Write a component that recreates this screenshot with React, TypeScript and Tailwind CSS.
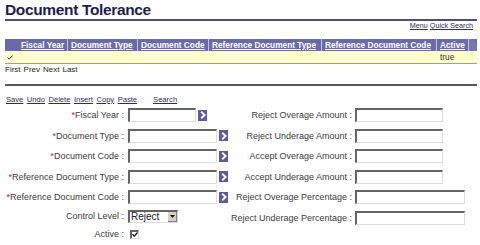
import React from 'react';

const headerCols = [
  { label: 'Fiscal Year', w: 'w-[50px]' },
  { label: 'Document Type', w: 'w-[70px]' },
  { label: 'Document Code', w: 'w-[71px]' },
  { label: 'Reference Document Type', w: 'w-[113px]' },
  { label: 'Reference Document Code', w: 'w-[115px]' },
  { label: 'Active', w: 'w-[32px]' },
];

type LeftRow = { label: string; req?: boolean; kind: 'lookup' | 'select' | 'check'; w?: string };

const leftRows: LeftRow[] = [
  { label: 'Fiscal Year', req: true, kind: 'lookup', w: 'w-[68px]' },
  { label: 'Document Type', req: true, kind: 'lookup', w: 'w-[89px]' },
  { label: 'Document Code', req: true, kind: 'lookup', w: 'w-[89px]' },
  { label: 'Reference Document Type', req: true, kind: 'lookup', w: 'w-[89px]' },
  { label: 'Reference Document Code', req: true, kind: 'lookup', w: 'w-[89px]' },
  { label: 'Control Level', kind: 'select' },
  { label: 'Active', kind: 'check' },
];

const rightRows = [
  { label: 'Reject Overage Amount', w: 'w-[88px]' },
  { label: 'Reject Underage Amount', w: 'w-[88px]' },
  { label: 'Accept Overage Amount', w: 'w-[88px]' },
  { label: 'Accept Underage Amount', w: 'w-[88px]' },
  { label: 'Reject Overage Percentage', w: 'w-[110px]' },
  { label: 'Reject Underage Percentage', w: 'w-[110px]' },
];

const inset =
  'border-t-2 border-l-2 border-r border-b border-t-[#646464] border-l-[#646464] border-r-[#dcdcdc] border-b-[#dcdcdc] bg-white';

const TextBox = ({ w }: { w: string }) => <div className={`${w} h-[14px] ${inset}`} />;

const LookupBtn = () => (
  <span className="ml-[2px] flex h-[11px] w-[9px] items-center justify-center bg-[#5a5aa2]">
    <svg width="6" height="8" viewBox="0 0 6 8">
      <path d="M1.2 0.8 L4.6 4 L1.2 7.2" stroke="white" strokeWidth="1.9" fill="none" />
    </svg>
  </span>
);

const Label = ({ text, req }: { text: string; req?: boolean }) => (
  <span className="whitespace-nowrap text-right text-[9px] leading-[12px] text-[#3c3c3c]">
    {req && <span className="text-[#d01010]">*</span>}
    {text} :
  </span>
);

export default function App() {
  return (
    <div className="h-[245px] w-[480px] overflow-hidden bg-white font-['Liberation_Sans',Arial,sans-serif]">
      <div className="ml-[5px] w-[472px]">
        <div className="h-[19px] pt-[1px] text-[15.5px] font-bold leading-[18px] tracking-[-0.35px] text-[#1e1e4a]">
          Document Tolerance
        </div>
        <div className="h-[2px] bg-[#4e4e6e]" />
        <div className="flex h-[11px] items-center justify-end gap-[2px] pr-[4px] text-[7.2px] text-[#2c2c66] underline">
          <span>Menu</span>
          <span>Quick Search</span>
        </div>

        {/* grid header */}
        <div className="mt-[7px] flex h-[12px] bg-[#6a6aa6]">
          <div className="w-[13px] rounded-tl-[10px] bg-[#6a6aa6]" />
          {headerCols.map((c) => (
            <div
              key={c.label}
              className={`${c.w} shrink-0 whitespace-nowrap border-r border-[#c4c4dc] pl-[3px] text-[8.3px] font-bold leading-[12px] text-white underline`}
            >
              {c.label}
            </div>
          ))}
          <div className="w-[8px] rounded-tr-[9px] bg-[#7676b0]" />
        </div>
        <div className="flex h-[13px] border-b border-[#9c9cb4] bg-[#ffffcc]">
          <div className="flex w-[13px] items-center pl-[2px]">
            <svg width="6" height="5" viewBox="0 0 6 5">
              <path d="M0.5 2.5 L2.2 4.2 L5.5 0.6" stroke="#333" strokeWidth="1" fill="none" />
            </svg>
          </div>
          <div className="w-[419px]" />
          <div className="pl-[3px] text-[8.3px] leading-[12px] text-[#333]">true</div>
        </div>
        <div className="flex h-[12px] items-center gap-[3px] text-[8px] text-[#222]">
          <span>First</span>
          <span>Prev</span>
          <span>Next</span>
          <span>Last</span>
        </div>
        <div className="mt-[8px] h-[2px] bg-[#55556a]" />
        <div className="mt-[8px] flex h-[11px] items-center pl-[1px] text-[7.6px] text-[#2c2c66] underline">
          <div className="flex gap-[3.5px]">
            <span>Save</span>
            <span>Undo</span>
            <span>Delete</span>
            <span>Insert</span>
            <span>Copy</span>
            <span>Paste</span>
          </div>
          <span className="ml-[16px]">Search</span>
        </div>
      </div>

      {/* form */}
      <div className="flex flex-col">
        {leftRows.map((r, i) => {
          const right = rightRows[i];
          return (
            <div
              key={r.label}
              className={`grid grid-cols-[127px_106px_121px_1fr] items-center ${
                r.kind === 'check' ? 'h-[12px]' : 'h-[20.5px]'
              }`}
            >
              <div className={`flex justify-end pr-[3px] ${r.kind === 'select' ? '-mt-[3px]' : ''}`}>
                <Label text={r.label} req={r.req} />
              </div>
              <div className="flex items-center pl-[1px]">
                {r.kind === 'lookup' && (
                  <>
                    <TextBox w={r.w!} />
                    <LookupBtn />
                  </>
                )}
                {r.kind === 'select' && (
                  <div className={`-mt-[3px] flex h-[13px] w-[50px] items-center justify-between ${inset}`}>
                    <span className="pl-[1px] text-[10px] leading-[11px] text-[#222]">Reject</span>
                    <span className="flex h-[10px] w-[9px] items-center justify-center border-r border-b border-[#808080] bg-[#d4d0c8]">
                      <svg width="5" height="3" viewBox="0 0 5 3">
                        <path d="M0 0 H5 L2.5 3 Z" fill="#111" />
                      </svg>
                    </span>
                  </div>
                )}
                {r.kind === 'check' && (
                  <div className={`ml-[2px] flex h-[9px] w-[9px] items-center justify-center ${inset}`}>
                    <svg width="6" height="5" viewBox="0 0 6 5">
                      <path d="M0.5 2.2 L2.2 4.2 L5.5 0.5" stroke="#111" strokeWidth="1.3" fill="none" />
                    </svg>
                  </div>
                )}
              </div>
              <div className="flex justify-end pr-[2px]">{right && <Label text={right.label} />}</div>
              <div className="flex items-center pl-[1px]">{right && <TextBox w={right.w} />}</div>
            </div>
          );
        })}
      </div>
    </div>
  );
}
